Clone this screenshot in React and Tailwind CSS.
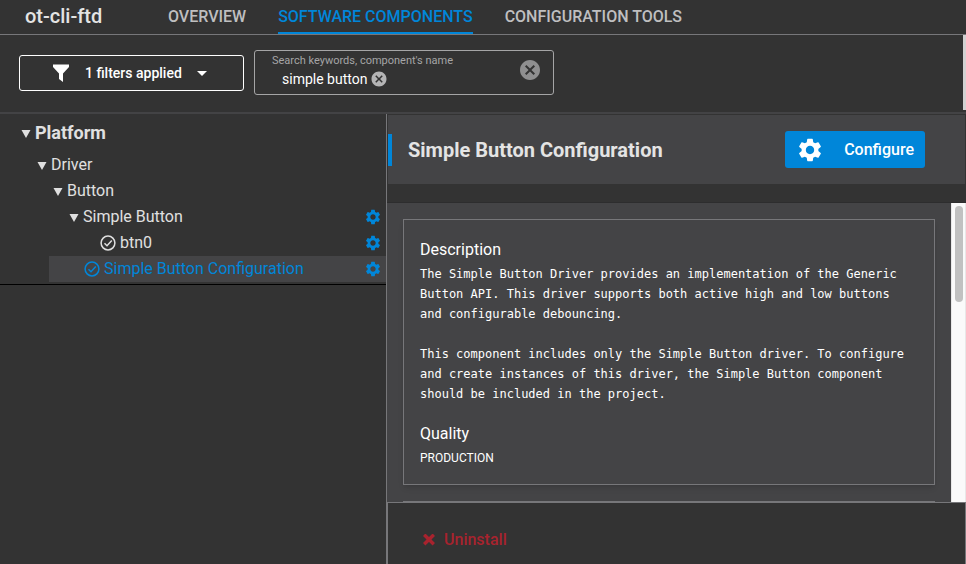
import { MdSettings, MdCancel, MdArrowDropDown } from "react-icons/md";

const tabs = [
  { label: "OVERVIEW", active: false },
  { label: "SOFTWARE COMPONENTS", active: true },
  { label: "CONFIGURATION TOOLS", active: false },
];

function Triangle() {
  return (
    <svg viewBox="0 0 10 10" className="size-[10px] shrink-0" fill="currentColor" aria-hidden="true">
      <path d="M.5 2h9L5 10z" />
    </svg>
  );
}

function CheckCircle() {
  return (
    <svg
      viewBox="0 0 16 16"
      className="mr-1 size-4 shrink-0"
      fill="none"
      stroke="currentColor"
      strokeWidth="1.5"
      aria-hidden="true"
    >
      <circle cx="8" cy="8" r="6.900" />
      <path d="M4.500 8.200l2.500 2.500L11.800 5.500" />
    </svg>
  );
}

function TreeRow({ label, indent, leaf, gear, selected }) {
  return (
    <li className={indent}>
      <button
        type="button"
        className={`flex h-[26px] w-full items-center pr-1 text-left text-base ${
          selected ? "bg-[#444446] pl-[35px] text-[#0086d9]" : ""
        }`}
      >
        {leaf ? (
          <CheckCircle />
        ) : (
          <span className="mr-1">
            <Triangle />
          </span>
        )}
        <span className="grow whitespace-nowrap">{label}</span>
        {gear && <MdSettings className="size-[18px] shrink-0 text-[#0086d9]" />}
      </button>
    </li>
  );
}

function Header() {
  return (
    <header className="flex h-[35px] shrink-0 items-stretch border-b border-[#77777a] pl-[25px]">
      <h1 className="w-[143px] text-xl leading-8 font-medium text-[#e4e4e4]">ot-cli-ftd</h1>
      <nav className="flex gap-8">
        {tabs.map((t) => (
          <a
            key={t.label}
            href="#"
            className={`border-b-2 pt-[2px] text-base leading-[30px] font-medium whitespace-nowrap ${
              t.active ? "border-[#0086d9] text-[#0086d9]" : "border-transparent text-[#bfbfc0]"
            }`}
          >
            {t.label}
          </a>
        ))}
      </nav>
    </header>
  );
}

function Toolbar() {
  return (
    <div className="flex h-[79px] shrink-0 justify-between border-b-2 border-[#434345]">
      <div className="flex gap-[10px] pt-[15px] pl-[19px]">
        <button
          type="button"
          className="mt-[5px] flex h-9 w-[225px] items-center rounded-[3px] border border-white pl-[33px] text-sm font-medium text-white"
        >
          <svg viewBox="0 0 16 18" className="mr-4 h-[18px] w-4" fill="currentColor" aria-hidden="true">
            <path d="M0 .5h16v2.500L10 9.500v8.500l-4-3V9.500L0 3z" />
          </svg>
          1 filters applied
          <MdArrowDropDown className="ml-2 size-6" />
        </button>
        <div className="flex h-[45px] w-[300px] items-start justify-between rounded-[3px] border border-[#a5a5a6] pr-[11px] pl-[17px]">
          <div className="pt-[2px]">
            <label htmlFor="search" className="block text-[11px] leading-4 text-[#a5a5a6]">
              Search keywords, component's name
            </label>
            <div className="flex h-5 items-center pl-[10px]">
              <input
                id="search"
                type="text"
                defaultValue="simple button"
                className="w-[88px] bg-transparent text-sm text-white outline-none"
              />
              <button type="button" aria-label="Remove keyword">
                <MdCancel className="size-[18px] text-[#b5b5b6]" />
              </button>
            </div>
          </div>
          <button type="button" aria-label="Clear search" className="pt-[7px]">
            <MdCancel className="size-6 text-[#8f8f90]" />
          </button>
        </div>
      </div>
      <div className="h-[75px] w-[3px] bg-[#d2d2d2]" />
    </div>
  );
}

function Tree() {
  return (
    <aside className="w-[387px] shrink-0 border-r border-[#77777a] text-[#e0e0e0]">
      <div className="border-b border-black pb-[2px]">
        <button type="button" className="flex h-[38px] items-center gap-1 pl-[21px] text-lg font-bold">
          <Triangle />
          Platform
        </button>
        <ul>
          <TreeRow label="Driver" indent="pl-[37px]" />
          <TreeRow label="Button" indent="pl-[53px]" />
          <TreeRow label="Simple Button" indent="pl-[69px]" gear />
          <TreeRow label="btn0" indent="pl-[100px]" leaf gear />
          <TreeRow label="Simple Button Configuration" indent="pl-[49px]" leaf gear selected />
        </ul>
      </div>
    </aside>
  );
}

function Details() {
  return (
    <main className="flex min-w-0 grow flex-col">
      <div className="mx-px mt-px flex h-[69px] shrink-0 items-center justify-between bg-[#444446] pr-10">
        <div className="flex items-center gap-4">
          <span className="h-8 w-1 bg-[#0086d9]" />
          <h2 className="text-xl font-bold text-[#e4e4e4]">Simple Button Configuration</h2>
        </div>
        <button
          type="button"
          className="flex h-[37px] w-[140px] items-center justify-between rounded-[3px] bg-[#0086d9] px-[11px] text-base font-medium text-white"
        >
          <MdSettings className="size-7" />
          Configure
        </button>
      </div>
      <div className="h-[19px] shrink-0 border-b border-[#2d2d2e]" />
      <div className="flex min-h-0 grow">
        <div className="min-w-0 grow overflow-hidden bg-[#444446] px-4 pt-4">
          <section className="border border-[#77777a] px-4 pt-5 pb-4 text-white shadow-md">
            <h3 className="text-base leading-5">Description</h3>
            <div className="mt-1 mb-5 flex max-w-[490px] flex-col gap-5 font-['DejaVu_Sans_Mono',monospace] text-xs leading-5">
              <p>
                The Simple Button Driver provides an implementation of the Generic Button API. This driver supports
                both active high and low buttons and configurable debouncing.
              </p>
              <p>
                This component includes only the Simple Button driver. To configure and create instances of this
                driver, the Simple Button component should be included in the project.
              </p>
            </div>
            <h3 className="text-base leading-5">Quality</h3>
            <p className="mt-1 text-xs leading-5">PRODUCTION</p>
          </section>
          <section className="mt-4 h-20 border border-[#77777a]" />
        </div>
        <div className="w-[15px] shrink-0 border-x border-[#e8e8e8] bg-[#fafafa] px-[3px] pt-[3px]">
          <div className="h-24 w-2 rounded-full bg-[#c1c1c1]" />
        </div>
      </div>
      <footer className="flex h-[62px] shrink-0 items-start border-x border-t border-[#77777a] pt-[25px] pl-[35px]">
        <button type="button" className="flex items-center gap-[9px] text-base font-medium text-[#a8232e]">
          <svg viewBox="0 0 12 12" className="size-3" stroke="currentColor" strokeWidth="3.500" aria-hidden="true">
            <path d="M1.200 .7l9.600 9.600M10.800 .7L1.200 10.300" />
          </svg>
          Uninstall
        </button>
      </footer>
    </main>
  );
}

export default function App() {
  return (
    <div className="flex h-screen flex-col overflow-hidden bg-[#333333] font-[Roboto,sans-serif]">
      <Header />
      <Toolbar />
      <div className="flex min-h-0 grow">
        <Tree />
        <Details />
      </div>
    </div>
  );
}
